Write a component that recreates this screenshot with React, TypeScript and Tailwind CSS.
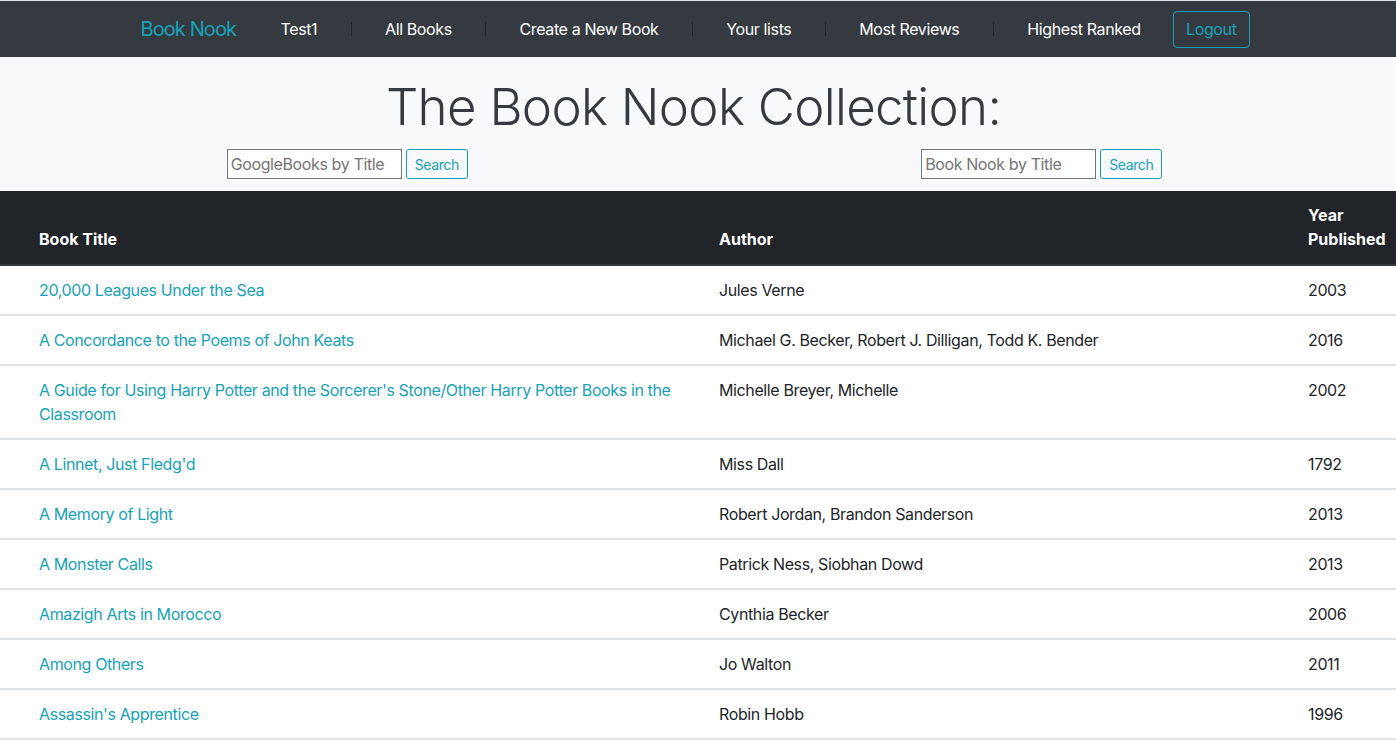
const books = [
  { title: '20,000 Leagues Under the Sea', author: 'Jules Verne', year: '2003' },
  {
    title: 'A Concordance to the Poems of John Keats',
    author: 'Michael G. Becker, Robert J. Dilligan, Todd K. Bender',
    year: '2016',
  },
  {
    title:
      "A Guide for Using Harry Potter and the Sorcerer's Stone/Other Harry Potter Books in the Classroom",
    author: 'Michelle Breyer, Michelle',
    year: '2002',
  },
  { title: "A Linnet, Just Fledg'd", author: 'Miss Dall', year: '1792' },
  { title: 'A Memory of Light', author: 'Robert Jordan, Brandon Sanderson', year: '2013' },
  { title: 'A Monster Calls', author: 'Patrick Ness, Siobhan Dowd', year: '2013' },
  { title: 'Amazigh Arts in Morocco', author: 'Cynthia Becker', year: '2006' },
  { title: 'Among Others', author: 'Jo Walton', year: '2011' },
  { title: "Assassin's Apprentice", author: 'Robin Hobb', year: '1996' },
];

const navLinks = ['Test1', 'All Books', 'Create a New Book', 'Your lists', 'Most Reviews', 'Highest Ranked'];

function Navbar() {
  return (
    <nav className="h-[57px] border-t border-[#dee2e6] bg-[#343a40] flex items-center justify-center pr-[6px]">
      <a className="text-[20px] text-[#17a2b8] mr-[11px] tracking-[-0.9px]">Book Nook</a>
      <div className="flex items-center">
        {navLinks.map((link, i) => (
          <div key={link} className="flex items-center">
            <a className="px-[33.4px] text-white text-[16px]">{link}</a>
            {i < navLinks.length - 1 && <span className="w-px h-[14px] bg-[#23272b]" />}
          </div>
        ))}
      </div>
      <button className="h-[37px] px-[12px] ml-[-1px] border border-[#17a2b8] rounded-[4px] text-[#17a2b8] text-[16px]">
        Logout
      </button>
    </nav>
  );
}

function SearchForm({ placeholder }: { placeholder: string }) {
  return (
    <div className="flex items-center justify-center gap-[4px]">
      <input
        placeholder={placeholder}
        className="w-[175px] h-[30px] px-[3px] border border-[#767676] bg-white text-[16px] tracking-[-0.38px] placeholder:text-[#757575]"
      />
      <button className="h-[30px] px-[8px] border border-[#17a2b8] rounded-[3px] text-[#17a2b8] text-[14px]">
        Search
      </button>
    </div>
  );
}

export default function App() {
  return (
    <div className="min-h-screen bg-white text-[#212529] font-['Inter',sans-serif] tracking-[-0.38px] overflow-hidden">
      <Navbar />

      {/* Header */}
      <section className="bg-[#f8f9fa] h-[134px] pt-[14px]">
        <h1 className="text-center text-[51px] leading-[72px] font-light text-[#343a40] tracking-[-0.7px] pr-[9px]">
          The Book Nook Collection:
        </h1>
        <div className="grid grid-cols-2 mt-[6px] pr-[7px]">
          <SearchForm placeholder="GoogleBooks by Title" />
          <SearchForm placeholder="Book Nook by Title" />
        </div>
      </section>

      {/* Books table */}
      <table className="w-full table-fixed border-collapse text-[16px] leading-[24px]">
        <colgroup>
          <col className="w-[707px]" />
          <col className="w-[589px]" />
          <col />
        </colgroup>
        <thead className="bg-[#212529] text-white tracking-normal">
          <tr className="border-b-2 border-[#32383e]">
            <th className="align-bottom text-left font-bold pl-[39px] pr-[12px] pt-[12px] pb-[13px]">Book Title</th>
            <th className="align-bottom text-left font-bold px-[12px] pt-[12px] pb-[13px]">Author</th>
            <th className="align-bottom text-left font-bold px-[12px] pt-[12px] pb-[13px] whitespace-nowrap">
              Year
              <br />
              Published
            </th>
          </tr>
        </thead>
        <tbody>
          {books.map((b) => (
            <tr key={b.title} className="border-b-2 border-[#dee2e6]">
              <td className="align-top pl-[39px] pr-[12px] py-[12px]">
                <a className="text-[#17a2b8]">{b.title}</a>
              </td>
              <td className="align-top px-[12px] py-[12px]">{b.author}</td>
              <td className="align-top px-[12px] py-[12px]">{b.year}</td>
            </tr>
          ))}
        </tbody>
      </table>
    </div>
  );
}
